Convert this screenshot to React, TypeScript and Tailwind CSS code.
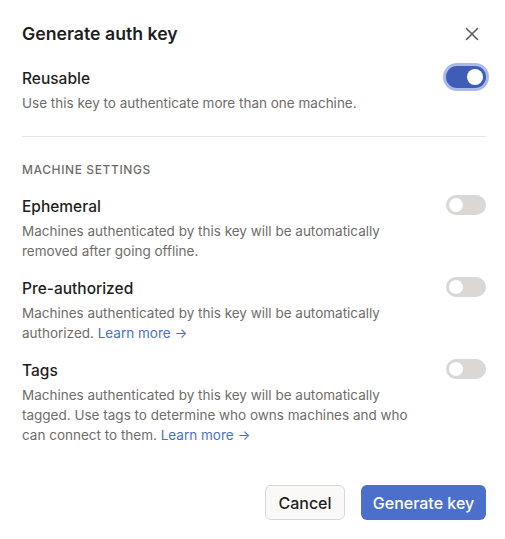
import React from "react";

function Toggle({ on }: { on?: boolean }) {
  if (on) {
    return (
      <div className="mt-0 shrink-0 w-[40px] h-[22px] rounded-full bg-[#3f5cb6] ring-[3px] ring-[#a9b9ea] flex items-center justify-end pr-[3px]">
        <div className="w-[16px] h-[16px] rounded-full bg-white" />
      </div>
    );
  }
  return (
    <div className="mt-px shrink-0 w-[40px] h-[20px] rounded-full bg-[#dad7d5] flex items-center pl-[3px]">
      <div className="w-[14px] h-[14px] rounded-full bg-white" />
    </div>
  );
}

function Row({ title, children, on }: { title: string; children: React.ReactNode; on?: boolean }) {
  return (
    <div className="flex justify-between">
      <div className="max-w-[400px]">
        <div className="pt-px text-[15.5px] leading-[24px] font-medium text-[#1f1e1e]">{title}</div>
        <div className="mt-[2px] text-[13.5px] leading-[20px] text-[#6f6c6a]">{children}</div>
      </div>
      <Toggle on={on} />
    </div>
  );
}

function Learn() {
  return <span className="text-[#4b70cc]">Learn more →</span>;
}

export default function App() {
  return (
    <div className="w-[505px] h-[539px] bg-white pl-[22px] pr-[19px] pt-[20px]" style={{ fontFamily: "Inter, 'Noto Sans', sans-serif" }}>
      <div className="flex items-center justify-between h-[28px]">
        <div className="text-[17.7px] font-semibold text-[#1f1e1e]">Generate auth key</div>
        <svg width="20" height="20" viewBox="0 0 20 20" className="mr-[4px]" fill="none" stroke="#5f5c5a" strokeWidth="1.6" strokeLinecap="round">
          <path d="M4.5 4.5 L15.5 15.5 M15.5 4.5 L4.5 15.5" />
        </svg>
      </div>
      <div className="mt-[18px]">
        <Row title="Reusable" on>Use this key to authenticate more than one machine.</Row>
      </div>
      <div className="mt-[23px] h-px bg-[#e8e6e5]" />
      <div className="mt-[25px] text-[12px] leading-[16px] font-medium tracking-[0.05em] text-[#6f6c6a]">MACHINE SETTINGS</div>
      <div className="mt-[16px] flex flex-col gap-[15px]">
        <Row title="Ephemeral">Machines authenticated by this key will be automatically removed after going offline.</Row>
        <Row title="Pre-authorized">
          Machines authenticated by this key will be automatically authorized. <Learn />
        </Row>
        <Row title="Tags">
          Machines authenticated by this key will be automatically tagged. Use tags to determine who owns machines and who can connect to them. <Learn />
        </Row>
      </div>
      <div className="mt-[40px] flex justify-end gap-[16px]">
        <button className="h-[35px] w-[80px] rounded-md border border-[#dad6d4] bg-[#faf9f8] text-[16px] font-medium text-[#1f1e1e]">Cancel</button>
        <button className="h-[35px] w-[125px] rounded-md bg-[#4b70cc] text-[16px] font-medium text-white">Generate key</button>
      </div>
    </div>
  );
}
